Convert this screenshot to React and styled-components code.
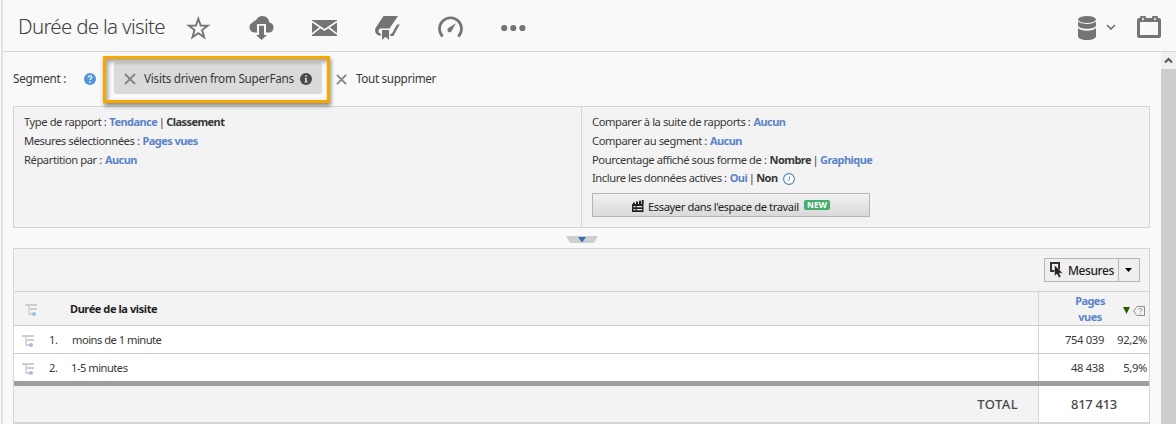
import React from "react";
import styled, { createGlobalStyle } from "styled-components";

const GlobalStyle = createGlobalStyle`
  *, *::before, *::after { box-sizing: border-box; }
  html, body { margin: 0; height: 424px; overflow: hidden; }
  body { background: #f9f9f9; color: #383838; font: 11.2px/19px "Noto Sans", "Open Sans", sans-serif; letter-spacing: -0.43px; }
  svg { display: block; flex: none; }
`;

const Window = styled.div`
  width: 1176px;
  height: 424px;
  padding-left: 1px;
  overflow: hidden;
`;

const Frame = styled.div`
  height: 424px;
  border-left: 2px solid #e3e3e3;
  display: flex;
  flex-direction: column;
`;

const Header = styled.header`
  height: 52px;
  flex: none;
  display: flex;
  align-items: center;
  padding: 5px 15px 0 15px;
  border-bottom: 1px solid #d5d5d5;
  color: #747474;
`;

const Title = styled.h1`
  width: 168px;
  margin: 0 0 4px;
  font-size: 20.5px;
  line-height: 28px;
  font-weight: 300;
  letter-spacing: -0.7px;
  white-space: nowrap;
  color: #404040;
`;

const Tools = styled.div`
  display: flex;
  align-items: center;
  gap: 38px;
`;

const HeaderRight = styled.div`
  margin-left: auto;
  display: flex;
  align-items: center;
`;

const Chevron = styled.span`
  margin: 0 21px 2px 10px;
`;

const Body = styled.div`
  flex: 1;
  min-height: 0;
  display: flex;
`;

const Content = styled.main`
  flex: 1;
  min-width: 0;
  padding: 0 11px 0 10px;
`;

const Scrollbar = styled.div`
  width: 15px;
  display: flex;
  flex-direction: column;
  background: #cdcdcd;
`;

const ScrollButton = styled.div`
  height: 17px;
  display: flex;
  align-items: center;
  justify-content: center;
  background: #f0f0f0;
`;

const SegmentBar = styled.div`
  height: 54px;
  display: flex;
  align-items: center;
  font-size: 11.7px;
  letter-spacing: -0.24px;
  white-space: nowrap;
`;

const SegmentLabel = styled.span`
  width: 71px;
  padding-bottom: 2px;
`;

const Highlight = styled.div`
  position: relative;
  z-index: 1;
  width: 227px;
  height: 47px;
  margin: 0 6px 0 7px;
  padding: 3px 5px 2px 8px;
  border: 3px solid #f7a700;
  box-shadow: 1px 3px 4px rgba(0, 0, 0, 0.45), inset 2px 3px 4px rgba(0, 0, 0, 0.35);
`;

const Chip = styled.div`
  height: 32px;
  display: flex;
  align-items: center;
  padding: 2px 10px 0 10px;
  border-radius: 3px;
  background: rgba(0, 0, 0, 0.12);
`;

const ChipText = styled.span`
  width: 156px;
  margin-left: 8px;
  padding-bottom: 1px;
`;

const RemoveAll = styled.span`
  margin-left: 9px;
  padding-bottom: 2px;
  letter-spacing: -0.33px;
`;

const Panel = styled.section`
  height: 122px;
  display: flex;
  border: 1px solid #d5d5d5;
  background: #f3f3f3;
`;

const PanelColumn = styled.div`
  width: ${(p) => p.$width};
  padding: 5px 10px 0;
  white-space: nowrap;

  & + & {
    border-left: 1px solid #d5d5d5;
  }
`;

const Setting = styled.div`
  display: flex;
  align-items: center;
  gap: 3px;
  height: ${(p) => p.$height || 19}px;
`;

const Separator = styled.span`
  width: 3px;
  display: flex;
  justify-content: center;
`;

const Strong = styled.b`
  font-size: 11px;
  letter-spacing: -0.55px;
`;

const Link = styled(Strong)`
  color: #5c83c8;
`;

const Clock = styled.span`
  margin: 2px 0 0 2px;
`;

const WorkspaceButton = styled.button`
  width: 278px;
  height: 24px;
  margin-top: 7px;
  padding: 2px 0 0 0;
  display: flex;
  align-items: center;
  justify-content: center;
  border: 1px solid #b5b5b5;
  background: linear-gradient(#f1f1f1, #d9d9d9);
  color: #222;
  font: inherit;
  letter-spacing: -0.41px;
`;

const WorkspaceText = styled.span`
  width: 151px;
  margin: 0 5px 0 4px;
  text-align: left;
`;

const NewBadge = styled.span`
  width: 26px;
  height: 10px;
  margin-bottom: 2px;
  border-radius: 2px;
  background: #45ac6c;
  color: #fff;
  font-size: 8.5px;
  line-height: 10px;
  font-weight: 700;
  letter-spacing: 0.1px;
`;

const Collapse = styled.div`
  height: 20px;
  padding: 8px 0 0 553px;
`;

const Table = styled.section`
  border: 1px solid #d5d5d5;
  border-bottom: 2px solid #d5d5d5;
  background: #f3f3f3;
`;

const TableToolbar = styled.div`
  height: 42px;
  display: flex;
  justify-content: flex-end;
  padding: 9px 9px 0 0;
`;

const SplitButton = styled.div`
  width: 96px;
  height: 24px;
  display: flex;
  border: 1px solid #b5b5b5;
  background: #efefef;
  color: #222;
  font-size: 12px;
  line-height: 23px;
  font-weight: 500;
`;

const SplitMain = styled.span`
  width: 73px;
  padding-left: 5px;
  display: flex;
  align-items: center;
  gap: 5px;
`;

const SplitArrow = styled.span`
  flex: 1;
  display: flex;
  align-items: center;
  justify-content: center;
  padding-right: 2px;
  border-left: 1px solid #b5b5b5;
`;

const TableRow = styled.div`
  display: flex;
  height: ${(p) => p.$height}px;
  border-top: 1px solid ${(p) => (p.$header ? "#d5d5d5" : "#cdcdcd")};
  background: ${(p) => (p.$header ? "#f3f3f3" : "#fff")};
`;

const NameCell = styled.div`
  flex: 1;
  display: flex;
  align-items: center;
  padding-left: ${(p) => (p.$header ? 11 : 8)}px;
`;

const RowMark = styled.span`
  padding-top: 3px;
`;

const HeaderName = styled.b`
  margin-left: 32px;
  font-size: 11px;
  letter-spacing: -0.42px;
  color: #222;
`;

const Rank = styled.span`
  width: 23px;
  margin-left: 14px;
`;

const ItemName = styled.span`
  letter-spacing: -0.52px;
  margin-left: ${(p) => p.$offset}px;
`;

const ValueCell = styled.div`
  width: 111px;
  display: flex;
  align-items: center;
  justify-content: flex-end;
  padding-right: 2px;
  border-left: 1px solid #d5d5d5;
  letter-spacing: -0.32px;
`;

const MetricName = styled(Link)`
  width: 40px;
  margin: 1px 13px 0 0;
  line-height: 16px;
  text-align: center;
`;

const SortMarks = styled.span`
  display: flex;
  align-items: center;
  gap: 3px;
  padding: 4px 2px 0 0;
`;

const Percent = styled.span`
  width: 43px;
  text-align: right;
`;

const TotalRow = styled.div`
  height: 41px;
  display: flex;
  border-top: 5px solid #9e9e9e;
  font-size: 13px;
  line-height: 37px;
  font-weight: 500;
  color: #484848;
`;

const TotalLabel = styled.div`
  flex: 1;
  padding-right: 20px;
  text-align: right;
  letter-spacing: 0.4px;
`;

const TotalValue = styled.div`
  width: 111px;
  border-left: 1px solid #d5d5d5;
  background: #fff;
  text-align: center;
  letter-spacing: -0.3px;
`;

const CrossIcon = ({ size = 12 }) => (
  <svg width={size} height={size} viewBox="0 0 12 12" stroke="#858585" strokeWidth="2">
    <path d="M1 1l10 10M11 1L1 11" />
  </svg>
);

const HelpIcon = () => (
  <svg width="12" height="12" viewBox="0 0 12 12">
    <circle cx="6" cy="6" r="6" fill="#5195dc" />
    <path d="M4.2 4.4C4.3 2.4 7.8 2.4 7.8 4.4C7.8 5.6 6 5.6 6 7.1" fill="none" stroke="#fff" strokeWidth="1.2" />
    <circle cx="6" cy="8.9" r=".8" fill="#fff" />
  </svg>
);

const InfoIcon = () => (
  <svg width="12" height="12" viewBox="0 0 12 12">
    <circle cx="6" cy="6" r="6" fill="#4a4a4a" />
    <path d="M5.2 2.3h1.7v1.5H5.2zM4.6 5h2.3v3.5h.7v1H4.5v-1h.8V6h-.7z" fill="#ddd" />
  </svg>
);

const ClockIcon = () => (
  <svg width="12" height="12" viewBox="0 0 12 12" fill="none">
    <circle cx="6" cy="6" r="5.4" fill="#fafcff" stroke="#4c82bd" strokeWidth="1.1" />
    <path d="M6.500 3.500v3.200L4.700 7.900" stroke="#7192b5" strokeWidth="1" />
  </svg>
);

const TreeIcon = () => (
  <svg width="13" height="13" viewBox="0 0 13 13">
    <path d="M0 0h12v2H0zM5 4h7v2H5zM5 9h4v2H5z" fill="#cecece" />
    <path d="M3 2h2v9H3z" fill="#d9d9d9" />
    <circle cx="9" cy="10" r="2.1" fill="#a9bfe2" />
  </svg>
);

const StarIcon = () => (
  <svg width="25" height="24" viewBox="0 0 25 24" fill="none" stroke="currentColor" strokeWidth="1.900">
    <path d="M12.300 2.800l2.400 6.700 7.100.2-5.700 4.300 2.100 7.300-5.900-4.100-5.900 4.100 2.100-7.300-5.700-4.300 7.100-.2z" />
  </svg>
);

const CloudIcon = () => (
  <svg width="25" height="24" viewBox="0 0 25 24" fill="currentColor">
    <path d="M8 16.500H5.500A5.200 5.200 0 0 1 4 6.400C4.300 5 5.800 4.200 7 4.500C8 1.500 10.500 0 13.300 0C17.500 0 20.300 3 20.200 6.600C22.800 6.800 24.500 9 24.500 11.500C24.500 14.500 22.500 16.500 19.500 16.500H17V8H8z" />
    <path d="M10 9.700h5V19h3l-5.500 5L7 19h3z" />
  </svg>
);

const MailIcon = () => (
  <svg width="25" height="24" viewBox="0 0 25 24">
    <path d="M0 4h25v16H0z" fill="currentColor" />
    <path d="M0 5.500l12.500 8.500L25 5.500M0 18l8.500-6.700M25 18L16.500 11.300" fill="none" stroke="#f9f9f9" strokeWidth="1.600" />
  </svg>
);

const BookIcon = () => (
  <svg width="25" height="24" viewBox="0 0 25 24" fill="currentColor">
    <path d="M8.500 0H23l-8.500 12.500H5.500C3.300 13 2.800 16 4.800 17.500H6v2H4C-.5 18.500-.8 13.500 1.500 10.500z" />
    <path d="M7 14h7v10l-3.500-3.200L7 24z" />
    <path d="M22 8.500h2.700L18.300 20H15.300v-2.200h1.500z" />
  </svg>
);

const GaugeIcon = () => (
  <svg width="25" height="24" viewBox="0 0 25 24" fill="none" stroke="currentColor">
    <path d="M4.700 20.500A11 11 0 1 1 20.300 20.500" strokeWidth="2.700" />
    <path d="M18 7.200l-4 7.100a2.300 2.300 0 1 1-3.200-2.500z" fill="currentColor" stroke="none" />
  </svg>
);

const MoreIcon = () => (
  <svg width="25" height="24" viewBox="0 0 25 24" fill="currentColor">
    <circle cx="3.200" cy="12" r="3.100" />
    <circle cx="12.300" cy="12" r="3.100" />
    <circle cx="21.400" cy="12" r="3.100" />
  </svg>
);

const DatabaseIcon = () => (
  <svg width="18" height="24" viewBox="0 0 18 24" fill="currentColor">
    <ellipse cx="9" cy="3.500" rx="9" ry="3.500" />
    <path d="M0 5.500C3 8.700 15 8.700 18 5.500V9.500C17 13.800 1 13.800 0 9.500z" />
    <path d="M0 12C3 15.500 15 15.500 18 12V20.500C17 25.200 1 25.200 0 20.500z" />
  </svg>
);

const ChevronIcon = () => (
  <svg width="10" height="7" viewBox="0 0 10 7" fill="none" stroke="currentColor" strokeWidth="1.700">
    <path d="M1 1l4 4 4-4" />
  </svg>
);

const CalendarIcon = () => (
  <svg width="24" height="24" viewBox="0 0 24 24">
    <path d="M2 2h20a2 2 0 0 1 2 2v16a2 2 0 0 1-2 2H2a2 2 0 0 1-2-2V4a2 2 0 0 1 2-2zM3 6v13h18V6z" fill="currentColor" fillRule="evenodd" />
    <path d="M3 2a3 3 0 0 1 6 0v3H3zM15 2a3 3 0 0 1 6 0v3h-6z" fill="currentColor" />
    <path d="M5.300 1.800h1.400v2.500H5.300zM17.300 1.800h1.400v2.500h-1.400z" fill="#f9f9f9" />
  </svg>
);

const WorkspaceIcon = () => (
  <svg width="12" height="12" viewBox="0 0 12 12" fill="#222">
    <path d="M0 4h11.500v8H0z" />
    <path d="M1 2.500h2V4H1zM4 1.500h2V4H4zM7 .8h2V4H7zM9.700 0h2v4h-2z" />
    <path d="M1.500 6h2v1.300h-2zM4.700 6h5.500v1.300H4.700zM1.500 9h2v1.300h-2zM4.700 9h5.500v1.300H4.700z" fill="#e8e8e8" />
  </svg>
);

const MetricsIcon = () => (
  <svg width="13" height="16" viewBox="0 0 13 16">
    <path d="M1 1h8v8H1z" fill="none" stroke="#333" strokeWidth="2" />
    <path d="M4.500 3v11L7 12l1.800 3.700 2.200-1-1.700-3.500h3.500z" fill="#222" stroke="#efefef" strokeWidth=".5" />
  </svg>
);

const TagIcon = () => (
  <svg width="12" height="10" viewBox="0 0 12 10" fill="none" stroke="#909090" strokeWidth="1">
    <path d="M4 .5h7.500v9H4L.5 5zM5.500 3.800C5.500 2 9 2 9 3.700C9 4.800 7.300 4.700 7.300 6M7.300 7.200v1" />
  </svg>
);

const rows = [
  { rank: "1.", name: "moins de 1 minute", offset: 0, value: "754 039", percent: "92,2%" },
  { rank: "2.", name: "1-5 minutes", offset: -1, value: "48 438", percent: "5,9%" },
];

export default function App() {
  return (
    <Window>
      <GlobalStyle />
      <Frame>
        <Header>
          <Title>Durée de la visite</Title>
          <Tools>
            <StarIcon />
            <CloudIcon />
            <MailIcon />
            <BookIcon />
            <GaugeIcon />
            <MoreIcon />
          </Tools>
          <HeaderRight>
            <DatabaseIcon />
            <Chevron><ChevronIcon /></Chevron>
            <CalendarIcon />
          </HeaderRight>
        </Header>
        <Body>
          <Content>
            <SegmentBar>
              <SegmentLabel>Segment :</SegmentLabel>
              <HelpIcon />
              <Highlight>
                <Chip>
                  <CrossIcon />
                  <ChipText>Visits driven from SuperFans</ChipText>
                  <InfoIcon />
                </Chip>
              </Highlight>
              <CrossIcon size={11} />
              <RemoveAll>Tout supprimer</RemoveAll>
            </SegmentBar>

            <Panel>
              <PanelColumn $width="567px">
                <Setting>Type de rapport : <Link>Tendance</Link><Separator>|</Separator><Strong>Classement</Strong></Setting>
                <Setting>Mesures sélectionnées : <Link>Pages vues</Link></Setting>
                <Setting>Répartition par : <Link>Aucun</Link></Setting>
              </PanelColumn>
              <PanelColumn $width="568px">
                <Setting>Comparer à la suite de rapports : <Link>Aucun</Link></Setting>
                <Setting>Comparer au segment : <Link>Aucun</Link></Setting>
                <Setting>Pourcentage affiché sous forme de : <Strong>Nombre</Strong><Separator>|</Separator><Link>Graphique</Link></Setting>
                <Setting $height={17}>Inclure les données actives : <Link>Oui</Link><Separator>|</Separator><Strong>Non</Strong><Clock><ClockIcon /></Clock></Setting>
                <WorkspaceButton>
                  <WorkspaceIcon />
                  <WorkspaceText>Essayer dans l'espace de travail</WorkspaceText>
                  <NewBadge>NEW</NewBadge>
                </WorkspaceButton>
              </PanelColumn>
            </Panel>

            <Collapse>
              <svg width="32" height="7" viewBox="0 0 32 7">
                <path d="M0 0h32l-4 7H4z" fill="#cfcfcf" />
                <path d="M12 1h8l-4 5.500z" fill="#396dbb" />
              </svg>
            </Collapse>

            <Table>
              <TableToolbar>
                <SplitButton>
                  <SplitMain><MetricsIcon />Mesures</SplitMain>
                  <SplitArrow>
                    <svg width="7" height="4" viewBox="0 0 7 4"><path d="M0 0h7L3.500 4z" /></svg>
                  </SplitArrow>
                </SplitButton>
              </TableToolbar>
              <TableRow $header $height={34}>
                <NameCell $header>
                  <RowMark><TreeIcon /></RowMark>
                  <HeaderName>Durée de la visite</HeaderName>
                </NameCell>
                <ValueCell>
                  <MetricName>Pages vues</MetricName>
                  <SortMarks>
                    <svg width="7" height="7" viewBox="0 0 7 7"><path d="M0 0h7L3.500 7z" fill="#2c5e00" /></svg>
                    <TagIcon />
                  </SortMarks>
                </ValueCell>
              </TableRow>
              {rows.map((row) => (
                <TableRow key={row.rank} $height={28}>
                  <NameCell>
                    <RowMark><TreeIcon /></RowMark>
                    <Rank>{row.rank}</Rank>
                    <ItemName $offset={row.offset}>{row.name}</ItemName>
                  </NameCell>
                  <ValueCell>
                    {row.value}
                    <Percent>{row.percent}</Percent>
                  </ValueCell>
                </TableRow>
              ))}
              <TotalRow>
                <TotalLabel>TOTAL</TotalLabel>
                <TotalValue>817 413</TotalValue>
              </TotalRow>
            </Table>
          </Content>
          <Scrollbar>
            <ScrollButton>
              <svg width="9" height="7" viewBox="0 0 9 7" fill="none" stroke="#555" strokeWidth="2">
                <path d="M1 5.500l3.500-3.500L8 5.500" />
              </svg>
            </ScrollButton>
          </Scrollbar>
        </Body>
      </Frame>
    </Window>
  );
}
